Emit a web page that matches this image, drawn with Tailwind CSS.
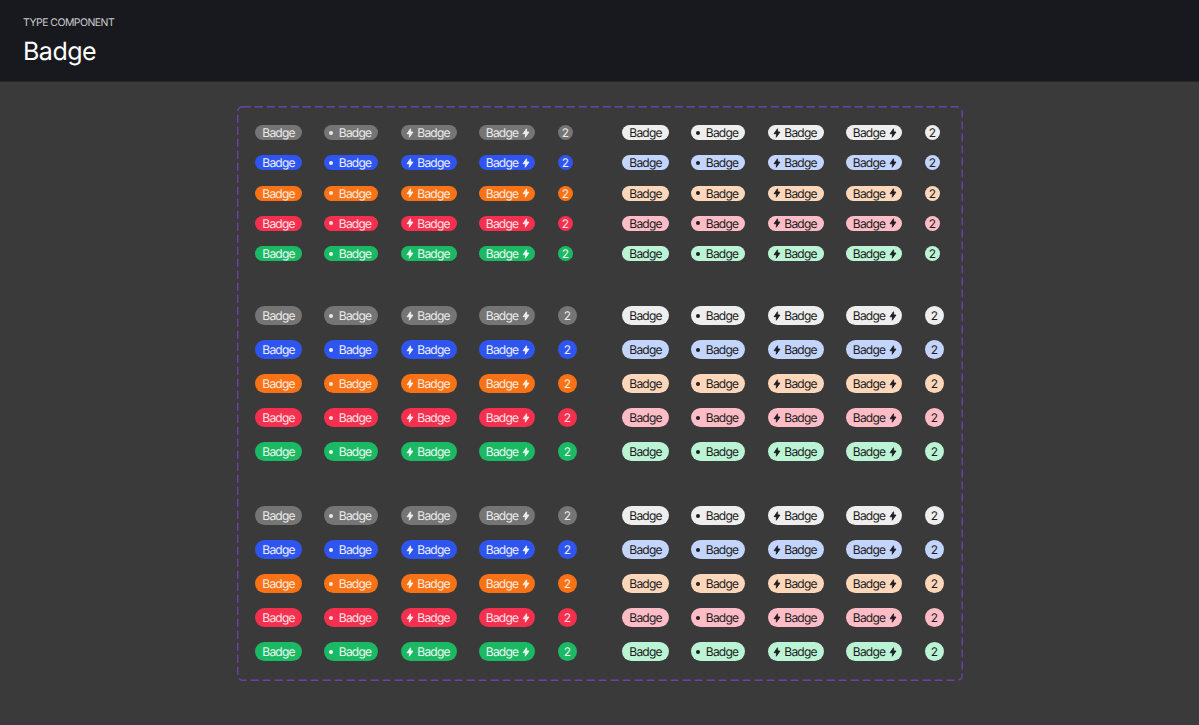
<!DOCTYPE html>
<html lang="en">
<head>
  <meta charset="UTF-8" />
  <title>Badge</title>
  <script src="https://cdn.jsdelivr.net/npm/@tailwindcss/browser@4"></script>
</head>
<body class="bg-[#3a3a3a] font-['Inter',sans-serif] [text-rendering:geometricPrecision] h-[725px] overflow-hidden">

  <!-- Header -->
  <header class="h-[82px] bg-[#18191e] border-b border-[#26272b] pl-[23px] pt-[16px]">
    <p class="text-[10.5px] leading-[14px] tracking-[-0.55px] text-[#c9c9cb]">TYPE COMPONENT</p>
    <h1 class="mt-[6px] text-[25px] leading-[32px] tracking-[-0.5px] text-white">Badge</h1>
  </header>

  <main class="pt-6 pl-[237px]">
    <div id="frame" class="relative w-[726px] h-[575px] pt-[19px] pl-[18px] flex flex-col gap-[45px]">
      <!-- dashed outline -->
      <svg class="absolute inset-0" width="726" height="575" fill="none">
        <rect x="0.75" y="0.75" width="724.5" height="573.5" rx="5" stroke="#6b41ad" stroke-width="1.4" stroke-dasharray="8 4"/>
      </svg>
      <section id="small" class="grid grid-cols-[69px_77px_78px_79px_64px_69px_77px_78px_79px_19px] gap-y-[15.25px] justify-items-start items-center"></section>
      <section id="large1" class="grid grid-cols-[69px_77px_78px_79px_64px_69px_77px_78px_79px_19px] gap-y-[15px] justify-items-start items-center"></section>
      <section id="large2" class="grid grid-cols-[69px_77px_78px_79px_64px_69px_77px_78px_79px_19px] gap-y-[15px] justify-items-start items-center"></section>
    </div>
  </main>

  <script>
    const solid = [
      "bg-[#757575] text-white/85",
      "bg-[#2f55f0] text-white/90",
      "bg-[#f97316] text-white/85",
      "bg-[#f4304e] text-white/85",
      "bg-[#1cb964] text-white/90"
    ];
    const light = [
      "bg-[#eeeeee] text-[#1d1d22]",
      "bg-[#c3d4fd] text-[#1d1d22]",
      "bg-[#fed7bb] text-[#1d1d22]",
      "bg-[#fdbcc6] text-[#1d1d22]",
      "bg-[#bbf4d5] text-[#1d1d22]"
    ];

    const label = '<span class="mt-px">Badge</span>';
    const dot = '<span class="w-[4px] h-[4px] rounded-full bg-current shrink-0"></span>';
    const bolt = '<svg class="w-[8px] h-[10px] shrink-0" viewBox="0 0 16 20" fill="currentColor" stroke="currentColor" stroke-width="1.6" stroke-linejoin="round"><path d="M9 1.500 2 11.500h5l-.5 7 7.500-10.500H9.500z"/></svg>';

    function badges(color, size) {
      const h = size === "sm" ? "h-[15px]" : "h-[19px]";
      const circle = size === "sm" ? "w-[15px]" : "w-[19px]";
      const base = "flex items-center justify-center rounded-full text-[12px] leading-none tracking-[-0.8px] " + h + " " + color;
      return `
        <span class="${base} w-[47px]">${label}</span>
        <span class="${base} w-[54px] pl-[6px] pr-2 gap-[6px]">${dot}${label}</span>
        <span class="${base} w-[56px] pl-[6px] pr-2 gap-[3px]">${bolt}${label}</span>
        <span class="${base} w-[56px] pl-2 pr-[6px] gap-[4px]">${label}${bolt}</span>
        <span class="${base} ${circle}"><span class="mt-px tracking-normal">2</span></span>`;
    }

    function renderSection(id, size) {
      let html = "";
      for (let i = 0; i < 5; i++) {
        html += badges(solid[i], size) + badges(light[i], size);
      }
      document.getElementById(id).innerHTML = html;
    }

    renderSection("small", "sm");
    renderSection("large1", "lg");
    renderSection("large2", "lg");
  </script>
</body>
</html>
